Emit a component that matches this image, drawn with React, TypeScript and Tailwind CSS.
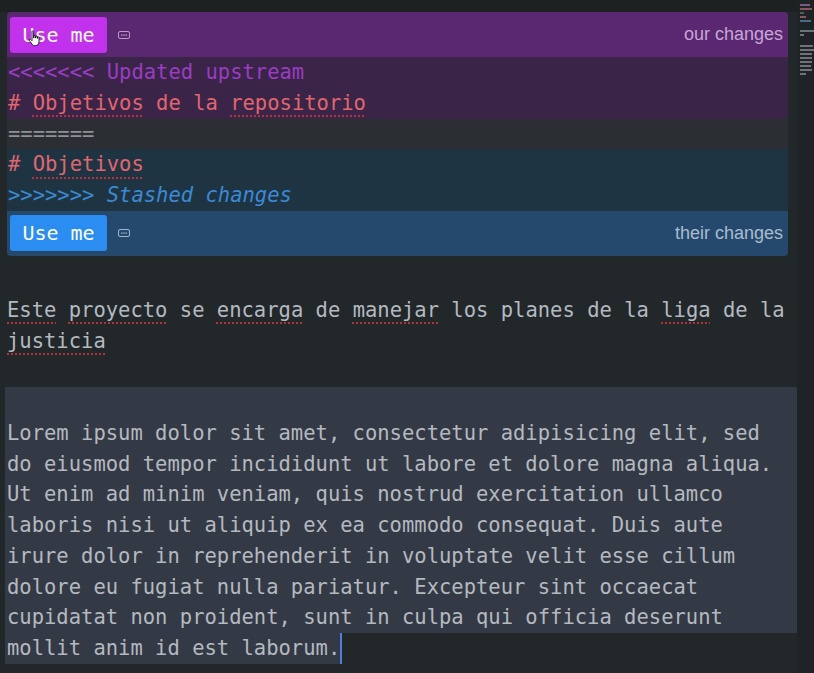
import React from "react";

const mono = "font-['DejaVu_Sans_Mono','Liberation_Mono',monospace]";

function Dots({ color }: { color: string }) {
  return (
    <svg width="12" height="8" viewBox="0 0 12 8" className="ml-[11px]">
      <rect x="0.5" y="0.5" width="11" height="7" rx="1.5" fill="none" stroke={color} />
      <rect x="3" y="3.5" width="1.5" height="1.2" fill={color} />
      <rect x="5.25" y="3.5" width="1.5" height="1.2" fill={color} />
      <rect x="7.5" y="3.5" width="1.5" height="1.2" fill={color} />
    </svg>
  );
}

function HandCursor() {
  return (
    <svg width="14" height="17" viewBox="0 0 14 17" className="absolute left-[21px] top-[18px]">
      <path
        d="M4 1.5c0-.8 1.6-.8 1.6 0V8h.3V6c0-.8 1.5-.8 1.5 0v2h.3V6.6c0-.8 1.5-.8 1.5 0V8.4h.3V7.4c0-.8 1.5-.8 1.5 0v4.4c0 2.2-1.3 3.8-3.6 3.8H6.6c-1.3 0-2-.6-2.7-1.6L1.3 10.3c-.5-.8.6-1.6 1.3-.9L4 10.8Z"
        fill="#fff"
        stroke="#111"
        strokeWidth="0.9"
      />
    </svg>
  );
}

function Header({ side }: { side: "ours" | "theirs" }) {
  const ours = side === "ours";
  return (
    <div
      className={
        ours
          ? "relative h-[45px] flex items-center bg-[#5a2870] rounded-t-[4px] pl-[3px] pr-[5px]"
          : "relative h-[45px] flex items-center bg-[#24496c] rounded-b-[4px] pl-[3px] pr-[5px]"
      }
    >
      <button
        className={
          (ours ? "bg-[#c232ec] " : "bg-[#2b8df2] ") +
          "h-[36px] w-[97px] rounded-[3px] text-white text-[20px] leading-none " +
          mono
        }
      >
        Use me
      </button>
      {ours && <HandCursor />}
      <Dots color={ours ? "#b99ac9" : "#9fb6cc"} />
      <span
        className={
          "ml-auto text-[18px] font-['Liberation_Sans',Arial,sans-serif] " +
          (ours ? "text-[#c7a6d6]" : "text-[#a9bccf]")
        }
      >
        {ours ? "our changes" : "their changes"}
      </span>
    </div>
  );
}

function Sp({ children }: { children: React.ReactNode }) {
  return (
    <span className="underline decoration-dotted decoration-[#b1333d] decoration-2 underline-offset-[6px]">
      {children}
    </span>
  );
}

const lorem = [
  "Lorem ipsum dolor sit amet, consectetur adipisicing elit, sed",
  "do eiusmod tempor incididunt ut labore et dolore magna aliqua.",
  "Ut enim ad minim veniam, quis nostrud exercitation ullamco",
  "laboris nisi ut aliquip ex ea commodo consequat. Duis aute",
  "irure dolor in reprehenderit in voluptate velit esse cillum",
  "dolore eu fugiat nulla pariatur. Excepteur sint occaecat",
  "cupidatat non proident, sunt in culpa qui officia deserunt",
];

function Minimap() {
  return (
    <div className="flex-1 bg-[#1e2326] pt-[4px] pl-[3px] flex flex-col gap-[2px]">
      <div className="h-[2px] w-[10px] bg-[#7a5a88]" />
      <div className="h-[2px] w-[12px] bg-[#8a5560]" />
      <div className="h-[2px] w-[4px] bg-[#55595e]" />
      <div className="h-[2px] w-[6px] bg-[#8a5560]" />
      <div className="h-[2px] w-[11px] bg-[#4a6a88]" />
      <div className="h-[4px]" />
      <div className="h-[2px] w-[14px] bg-[#6e7378]" />
      <div className="h-[2px] w-[4px] bg-[#6e7378]" />
      <div className="h-[5px]" />
      <div className="h-[2px] w-[13px] bg-[#6e7378]" />
      <div className="h-[2px] w-[14px] bg-[#6e7378]" />
      <div className="h-[2px] w-[12px] bg-[#6e7378]" />
      <div className="h-[2px] w-[12px] bg-[#6e7378]" />
      <div className="h-[2px] w-[12px] bg-[#6e7378]" />
      <div className="h-[2px] w-[11px] bg-[#6e7378]" />
      <div className="h-[2px] w-[12px] bg-[#6e7378]" />
      <div className="h-[2px] w-[6px] bg-[#6e7378]" />
    </div>
  );
}

export default function App() {
  return (
    <div className="w-[814px] h-[673px] overflow-hidden bg-[#22272a] flex">
      <div className={"w-[797px] flex flex-col text-[20.5px] leading-[30.75px] text-[#b4b9c0] " + mono}>
        <div className="h-[12px] bg-[#1c2121] -mr-[17px] shrink-0" />
        <div className="ml-[7px] w-[781px] flex flex-col">
          <Header side="ours" />
          <div className="bg-[#3a2447] pl-[1px]">
            <div className="text-[#9a3cc4] whitespace-pre">{"<<<<<<< Updated upstream"}</div>
            <div className="text-[#e0666f] whitespace-pre">
              # <Sp>Objetivos</Sp> de la <Sp>repositorio</Sp>
            </div>
          </div>
          <div className="bg-[#2b2e33] pl-[1px] text-[#8d9196] whitespace-pre">=======</div>
          <div className="bg-[#1f3443] pl-[1px]">
            <div className="text-[#e0666f] whitespace-pre">
              # <Sp>Objetivos</Sp>
            </div>
            <div className="text-[#3a8ad4] whitespace-pre italic">{">>>>>>> Stashed changes"}</div>
          </div>
          <Header side="theirs" />
        </div>
        <div className="h-[39px] shrink-0" />
        <div className="pl-[7px] whitespace-pre">
          <Sp>Este</Sp> <Sp>proyecto</Sp> se <Sp>encarga</Sp> de <Sp>manejar</Sp> los planes de la <Sp>liga</Sp> de la
        </div>
        <div className="pl-[7px] whitespace-pre">
          <Sp>justicia</Sp>
        </div>
        <div className="h-[30.75px] shrink-0" />
        <div className="ml-[5px] bg-[#343a45] pl-[2px]">
          <div className="h-[30.75px]" />
          {lorem.map((l) => (
            <div key={l} className="whitespace-pre">
              {l}
            </div>
          ))}
        </div>
        <div className="ml-[5px] flex">
          <span className="bg-[#343a45] pl-[2px] whitespace-pre">mollit anim id est laborum.</span>
          <span className="w-[2px] h-[30.75px] bg-[#4d7fe0]" />
        </div>
      </div>
      <Minimap />
    </div>
  );
}
